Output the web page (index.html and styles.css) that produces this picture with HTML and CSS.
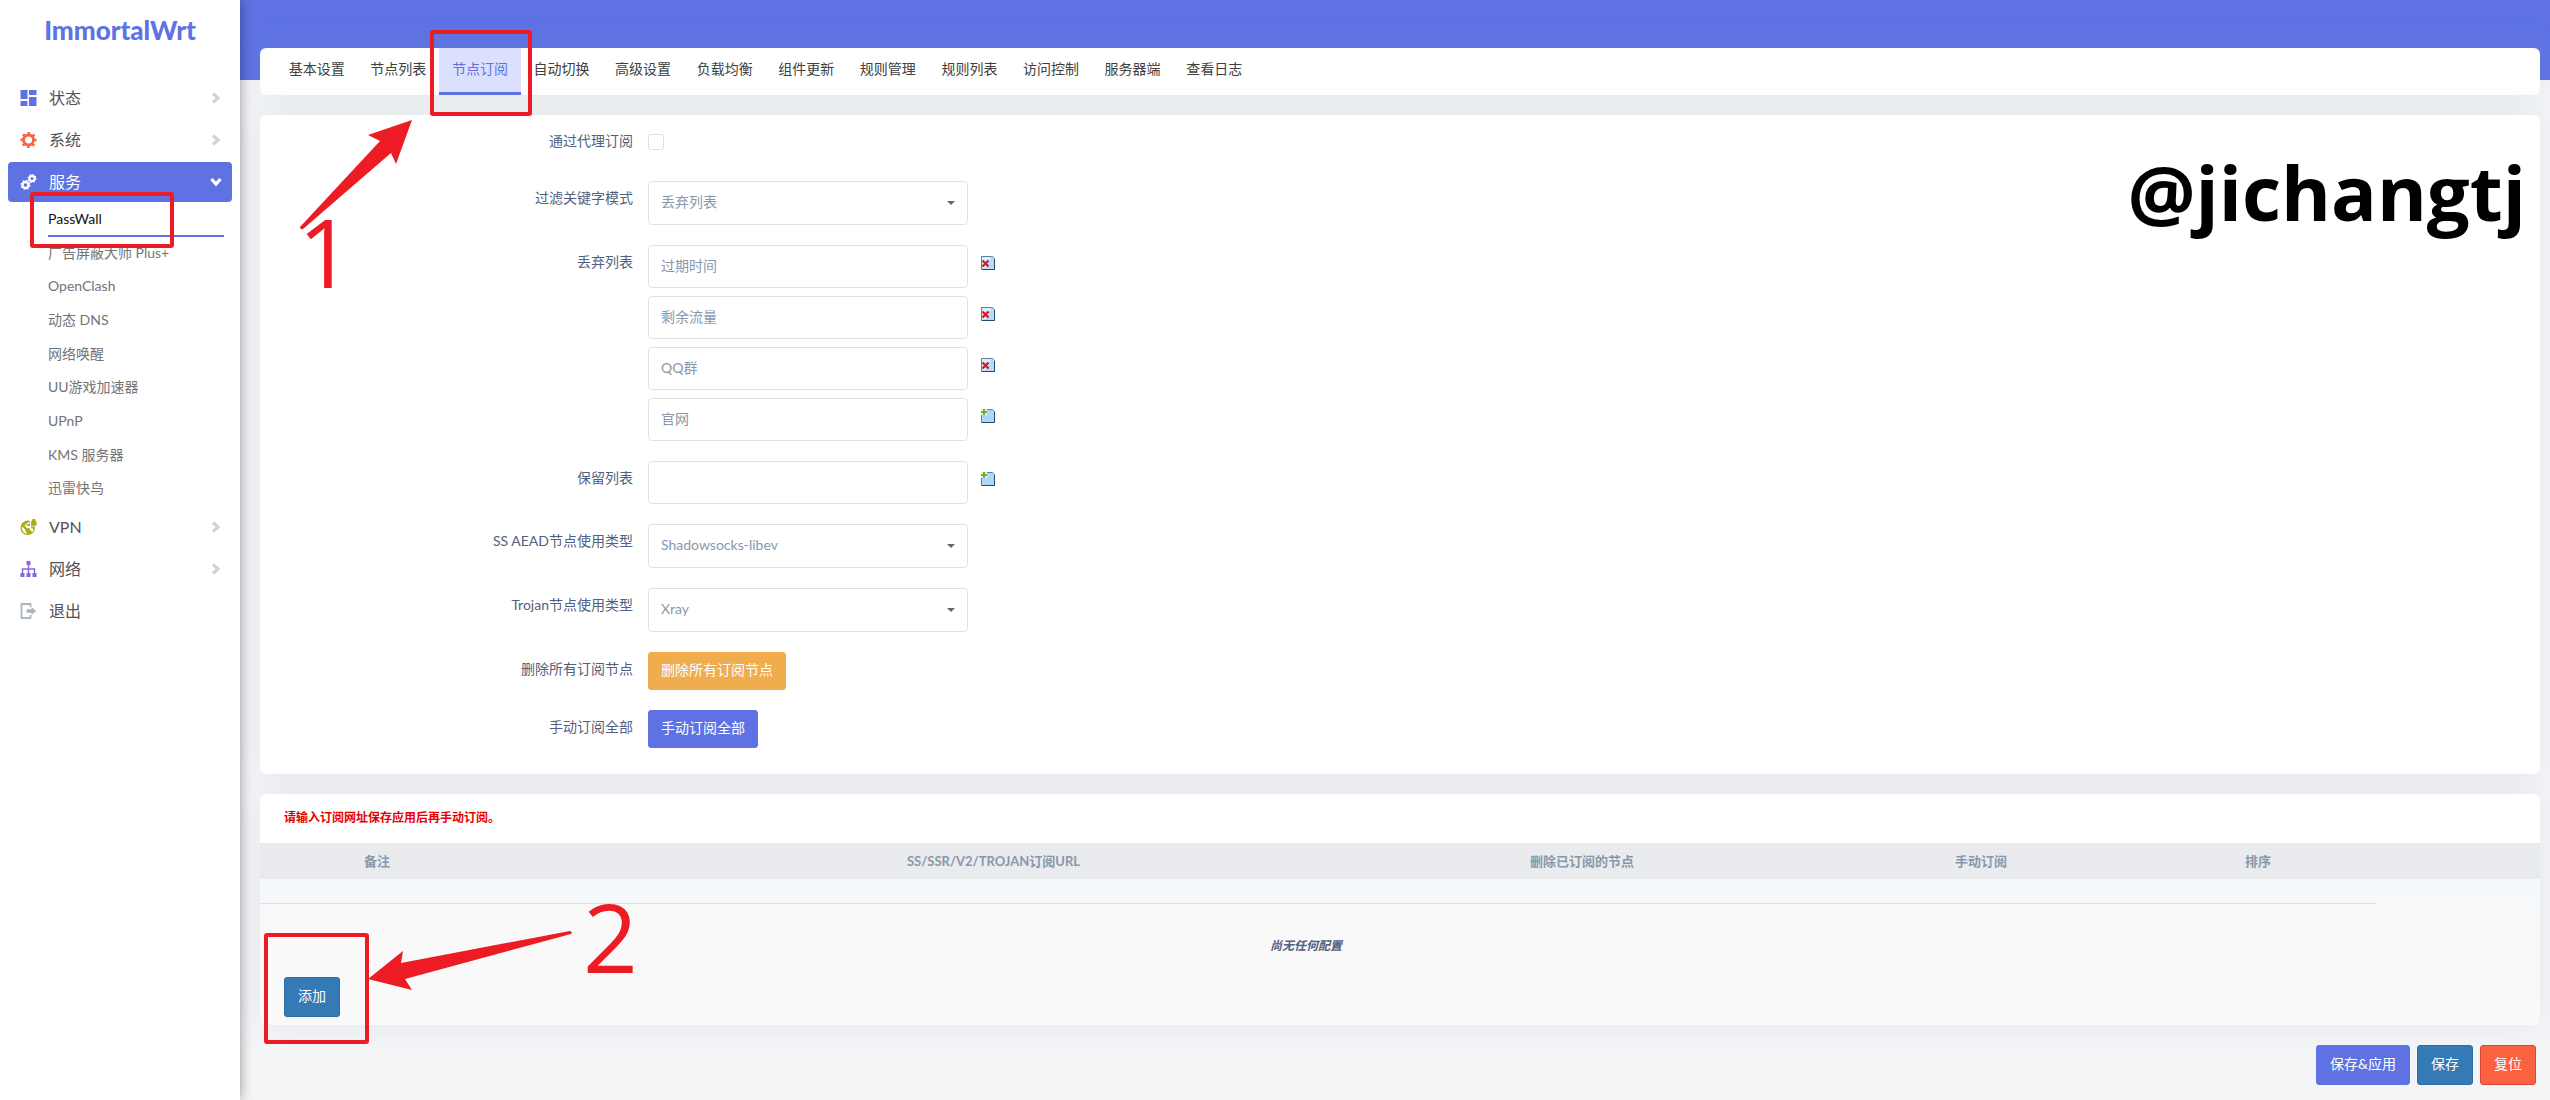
FILE: index.html
```html
<!DOCTYPE html>
<html lang="zh-CN">
<head>
<meta charset="utf-8">
<title>ImmortalWrt - PassWall</title>
<link rel="stylesheet" href="styles.css">
</head>
<body>
<svg class="defs" aria-hidden="true">
  <defs>
    <symbol id="chev" viewBox="0 0 10 12"><path d="M2 1.500l5 4.500-5 4.500" fill="none" stroke="currentColor" stroke-width="3.200"/></symbol>
    <symbol id="del" viewBox="0 0 14 14">
      <path d="M.5 .5h11l2 2v11H.5z" fill="#b9dcf8" stroke="#5583a8"/>
      <path d="M13.500 3v10.500H1" fill="none" stroke="#274a6e"/>
      <path d="M1 1h9L5 12H1z" fill="#e4eef8"/>
      <path d="M1.500 4.500l6 6M7.500 4.500l-6 6" stroke="#c8202c" stroke-width="2.400"/>
    </symbol>
    <symbol id="add" viewBox="0 0 14 14">
      <path d="M.5 .5h11l2 2v11H.5z" fill="#aed6f7" stroke="#5583a8"/>
      <path d="M13.500 3v10.500H1" fill="none" stroke="#274a6e"/>
      <path d="M0 0h6v6H0z" fill="#eaf4fc"/>
      <path d="M3 0v6M0 3h6" stroke="#6fae2e" stroke-width="2.200"/>
    </symbol>
  </defs>
</svg>
<div class="layout">
  <aside class="sidebar">
    <a class="logo" href="#">ImmortalWrt</a>
    <nav>
      <ul class="menu">
        <li><a class="menu-item" href="#">
          <svg class="ico blue" viewBox="0 0 16 16"><path d="M0 0h7v9H0zM8.500 0H16v5H8.500zM8.500 7H16v9H8.500zM0 11h7v5H0z" fill="currentColor"/></svg>
          <span>状态</span><svg class="chev"><use href="#chev"/></svg></a></li>
        <li><a class="menu-item" href="#">
          <svg class="ico orange" viewBox="0 0 16 16"><circle cx="8" cy="8" r="5" fill="none" stroke="currentColor" stroke-width="2.800"/><circle cx="8" cy="8" r="7" fill="none" stroke="currentColor" stroke-width="2" stroke-dasharray="2.750 2.750" stroke-dashoffset="1.370"/></svg>
          <span>系统</span><svg class="chev"><use href="#chev"/></svg></a></li>
        <li><a class="menu-item active" href="#">
          <svg class="ico" viewBox="0 0 16 16" fill="none" stroke="currentColor"><circle cx="5" cy="11" r="3" stroke-width="2.400"/><circle cx="5" cy="11" r="4.300" stroke-width="1.400" stroke-dasharray="1.690 1.690"/><circle cx="11.500" cy="4.500" r="2.600" stroke-width="2.200"/><circle cx="11.500" cy="4.500" r="3.800" stroke-width="1.300" stroke-dasharray="1.490 1.490"/></svg>
          <span>服务</span><svg class="chev down"><use href="#chev"/></svg></a>
          <ul class="submenu">
            <li><a class="current" href="#">PassWall</a></li>
            <li><a href="#">广告屏蔽大师 Plus+</a></li>
            <li><a href="#">OpenClash</a></li>
            <li><a href="#">动态 DNS</a></li>
            <li><a href="#">网络唤醒</a></li>
            <li><a href="#">UU游戏加速器</a></li>
            <li><a href="#">UPnP</a></li>
            <li><a href="#">KMS 服务器</a></li>
            <li><a href="#">迅雷快鸟</a></li>
          </ul></li>
        <li><a class="menu-item" href="#">
          <svg class="ico olive" viewBox="0 0 16 16"><circle cx="7.200" cy="8.800" r="7.200" fill="currentColor"/><path d="M1.500 7.500l3.500 3.300v1.200l1.200 1.500v1C3 14 1 11 1.500 7.500zM9 2.500v1.700L7.500 5.500H6V7h4l1 2.500h1.500L12.800 12l-1.300 1-.8-1.500H9.500V9.500L6 9 5 7.500 4 6.500z" fill="#fff"/><path d="M9.500 0H16v7.500H9.500z" fill="#fff"/><path d="M10.500 2.500H16V6.700h-5.500zM11.300 2.500V1.800a2 2 0 014 0v.7z" fill="currentColor"/></svg>
          <span>VPN</span><svg class="chev"><use href="#chev"/></svg></a></li>
        <li><a class="menu-item" href="#">
          <svg class="ico purple" viewBox="0 0 16 16"><path d="M6 0h4v4H6zM0 12h4v4H0zM6 12h4v4H6zM12 12h4v4h-4z" fill="currentColor"/><path d="M8 4v8M2 12V8h12v4" fill="none" stroke="currentColor" stroke-width="1.400"/></svg>
          <span>网络</span><svg class="chev"><use href="#chev"/></svg></a></li>
        <li><a class="menu-item" href="#">
          <svg class="ico grey" viewBox="0 0 16 16"><path d="M10 4V1H1v14h9v-3" fill="none" stroke="currentColor" stroke-width="1.800"/><path d="M6 6.300h5V4l4.700 4-4.700 4V9.700H6z" fill="currentColor"/></svg>
          <span>退出</span></a></li>
      </ul>
    </nav>
  </aside>
  <main class="main">
    <nav class="card tabs">
      <div class="tab-list">
        <a href="#">基本设置</a><a href="#">节点列表</a><a class="on" href="#">节点订阅</a><a href="#">自动切换</a><a href="#">高级设置</a><a href="#">负载均衡</a><a href="#">组件更新</a><a href="#">规则管理</a><a href="#">规则列表</a><a href="#">访问控制</a><a href="#">服务器端</a><a href="#">查看日志</a>
      </div>
    </nav>
    <form class="card settings">
      <div class="row"><label for="proxy">通过代理订阅</label><div class="field check"><input type="checkbox" id="proxy"></div></div>
      <div class="row"><label for="mode">过滤关键字模式</label><div class="field"><select id="mode"><option>丢弃列表</option></select></div></div>
      <div class="row"><label for="d1">丢弃列表</label>
        <div class="field">
          <div class="entry"><input type="text" id="d1" value="过期时间"><button type="button" class="mini" aria-label="删除"><svg><use href="#del"/></svg></button></div>
          <div class="entry"><input type="text" aria-label="丢弃列表" value="剩余流量"><button type="button" class="mini" aria-label="删除"><svg><use href="#del"/></svg></button></div>
          <div class="entry"><input type="text" aria-label="丢弃列表" value="QQ群"><button type="button" class="mini" aria-label="删除"><svg><use href="#del"/></svg></button></div>
          <div class="entry"><input type="text" aria-label="丢弃列表" value="官网"><button type="button" class="mini" aria-label="添加"><svg><use href="#add"/></svg></button></div>
        </div></div>
      <div class="row"><label for="keep">保留列表</label><div class="field"><div class="entry"><input type="text" id="keep"><button type="button" class="mini" aria-label="添加"><svg><use href="#add"/></svg></button></div></div></div>
      <div class="row"><label for="ss">SS AEAD节点使用类型</label><div class="field"><select id="ss"><option>Shadowsocks-libev</option></select></div></div>
      <div class="row"><label for="trojan">Trojan节点使用类型</label><div class="field"><select id="trojan"><option>Xray</option></select></div></div>
      <div class="row"><label for="clear">删除所有订阅节点</label><div class="field"><button type="button" id="clear" class="btn warn">删除所有订阅节点</button></div></div>
      <div class="row"><label for="manual">手动订阅全部</label><div class="field"><button type="button" id="manual" class="btn primary">手动订阅全部</button></div></div>
    </form>
    <section class="card subs">
      <p class="note">请输入订阅网址保存应用后再手动订阅。</p>
      <table>
        <colgroup><col class="c-name"><col><col class="c-del"><col class="c-sub"><col class="c-sort"><col class="c-act"></colgroup>
        <thead>
          <tr><th class="first">备注</th><th>SS/SSR/V2/TROJAN订阅URL</th><th>删除已订阅的节点</th><th>手动订阅</th><th>排序</th><th></th></tr>
        </thead>
        <tbody>
          <tr class="descr"><td></td><td></td><td></td><td></td><td></td><td></td></tr>
          <tr class="empty"><td colspan="5"><em>尚无任何配置</em></td><td></td></tr>
        </tbody>
      </table>
      <div class="create"><button type="button" class="btn tall save">添加</button></div>
    </section>
    <div class="actions">
      <button type="button" class="btn tall primary">保存&amp;应用</button>
      <button type="button" class="btn tall save">保存</button>
      <button type="button" class="btn tall reset">复位</button>
    </div>
  </main>
</div>
<div class="watermark">@jichangtj</div>
<svg class="marks" width="700" height="1060" viewBox="0 0 700 1060">
  <g class="mark-box"><rect x="432" y="32" width="98" height="82" rx="1"/><rect x="32" y="194" width="140" height="52" rx="1"/><rect x="266" y="935" width="101" height="107" rx="1"/></g>
  <path d="M412 120L368 135 380 141 300 227Q300 230 303 229L391 153 396 164z"/>
  <path d="M368 979L403 951 401 963 570 931Q573 932 571 934L405 979 412 990z"/>
  <text x="298" y="288">1</text>
  <text x="583" y="973">2</text>
</svg>
</body>
</html>
```
FILE: styles.css
```css
* { box-sizing: border-box; }
body {
  margin: 0;
  position: relative;
  background: #f4f5f7;
  color: #525f7f;
  font: 14px/20px Lato, "Noto Sans CJK SC", sans-serif;
}
a { color: inherit; text-decoration: none; }
ul { list-style: none; margin: 0; padding: 0; }
button, input, select { font: inherit; }
.defs { position: absolute; width: 0; height: 0; }

.layout { display: flex; min-height: 100vh; }

/* sidebar */
.sidebar {
  flex: none;
  width: 240px;
  background: #fff;
  box-shadow: 0 0 12px rgba(0, 0, 0, .4);
  z-index: 1;
}
.logo {
  display: block;
  height: 77px;
  padding-top: 14px;
  text-align: center;
  color: #5e72e4;
  font: 900 26px/32px Lato, sans-serif;
}
.menu > li { display: flow-root; }
.menu-item {
  display: flex;
  align-items: center;
  height: 40px;
  margin: 1px 8px;
  padding: 0 11px 0 12px;
  border-radius: 4px;
  font-size: 16px;
  color: #525255;
}
.menu-item span { flex: 1; margin-left: 12px; }
.menu-item.active { background: #5e72e4; color: #fff; }
.ico { flex: none; width: 17px; height: 16px; }
.blue { color: #5e72e4; }
.orange { color: #fb6340; }
.olive { color: #a9ae12; }
.purple { color: #8965e0; }
.grey { color: #adb5bd; }
.chev { width: 10px; height: 12px; color: #ced4da; }
.chev.down { color: #fff; transform: rotate(90deg); }
.submenu {
  display: grid;
  grid-auto-rows: 1fr;
  min-height: 303px;
  padding: 0 16px 0 48px;
  color: #747474;
}
.submenu li { display: grid; }
.submenu a { line-height: 31px; }
.submenu .current { color: #111; border-bottom: 2px solid #5e72e4; }

/* content */
.main {
  flex: 1;
  min-width: 0;
  padding: 48px 10px 15px 20px;
  background: linear-gradient(#5e72e4, #5e72e4) 0 0 / 100% 80px no-repeat;
}
.card {
  margin-bottom: 20px;
  background: #fff;
  border-radius: 6px;
  box-shadow: 0 0 32px rgba(136, 152, 170, .15);
}
.tabs { padding: 0 16px; color: #404040; }
.tab-list {
  display: grid;
  grid-template-columns: repeat(12, 1fr);
  max-width: 979px;
}
.tabs a {
  padding-bottom: 2px;
  text-align: center;
  line-height: 42px;
  border-bottom: 3px solid transparent;
}
.tabs .on { color: #5e72e4; background: #dce0ff; border-color: #5e72e4; }

.settings {
  display: flex;
  flex-direction: column;
  gap: 20px;
  padding: 9px 0 26px;
}
.row { display: flex; gap: 15px; }
.row > label { width: 373px; padding-top: 7px; text-align: right; }
.field { display: flex; flex-direction: column; align-items: flex-start; gap: 8px; }
.field.check { padding: 10px 0 11px; }
.entry { display: flex; gap: 13px; }
input[type="checkbox"] {
  appearance: none;
  width: 16px;
  height: 16px;
  margin: 0;
  border: 1px solid #dee2e6;
  border-radius: 3px;
  background: #fff;
}
select, input[type="text"] {
  width: 320px;
  height: 43px;
  padding: 0 12px 3px;
  border: 1px solid #dee2e6;
  border-radius: 4px;
  background: #fff;
  color: #8898aa;
}
select {
  appearance: none;
  height: 44px;
  background: #fff url("data:image/svg+xml,%3Csvg xmlns='http://www.w3.org/2000/svg' width='8' height='4'%3E%3Cpath d='M0 0h8L4 4z' fill='%23666'/%3E%3C/svg%3E") right 12px center no-repeat;
}
.mini { width: 14px; height: 14px; margin-top: 11px; padding: 0; border: 0; background: none; }
.mini svg { display: block; width: 14px; height: 14px; }
.btn {
  height: 38px;
  padding: 0 12px 2px;
  border: 1px solid;
  border-radius: 3px;
  color: #fff;
}
.tall { height: 40px; padding: 0 13px 2px; }
.primary { background: #5e72e4; border-color: #5e72e4; }
.warn { background: #f0ad4e; border-color: #f0ad4e; }
.save { background: #337ab7; border-color: #2e6da4; }
.reset { background: #fb6340; border-color: #d9443a; }

.subs { background: #f9f9f9; overflow: hidden; }
.note {
  margin: 0;
  padding: 14px 24px 15px;
  background: #fff;
  color: #e60000;
  font-size: 12px;
  font-weight: 700;
}
table { width: 100%; table-layout: fixed; border-collapse: collapse; }
.c-name { width: 385px; }
.c-del { width: 480px; }
.c-sub { width: 318px; }
.c-sort { width: 236px; }
.c-act { width: 164px; }
thead { background: #e9ebef; }
th { height: 36px; padding: 0; font-size: 13px; color: #8898aa; }
th.first { padding-left: 104px; text-align: left; }
td { padding: 0; }
.descr { background: #f6f9fc; }
.descr td { height: 24px; border-bottom: 1px solid #dcdfe4; }
.descr td:last-child { border-bottom: 0; }
.empty td { padding: 32px 24px 21px 0; text-align: center; font-size: 12px; font-weight: 700; }
.create { padding: 0 24px 8px; }
.actions { display: flex; justify-content: flex-end; gap: 7px; padding-right: 4px; }

/* overlays */
.watermark {
  position: absolute;
  top: 138px;
  right: 24px;
  color: #000;
  font: 700 76px/108px "Open Sans", sans-serif;
}
.marks {
  position: absolute;
  top: 0;
  left: 0;
  z-index: 2;
  pointer-events: none;
  fill: #ed1c24;
  font: 500 96px "Open Sans", sans-serif;
}
.mark-box { fill: none; stroke: #ed1c24; stroke-width: 4; }
```
